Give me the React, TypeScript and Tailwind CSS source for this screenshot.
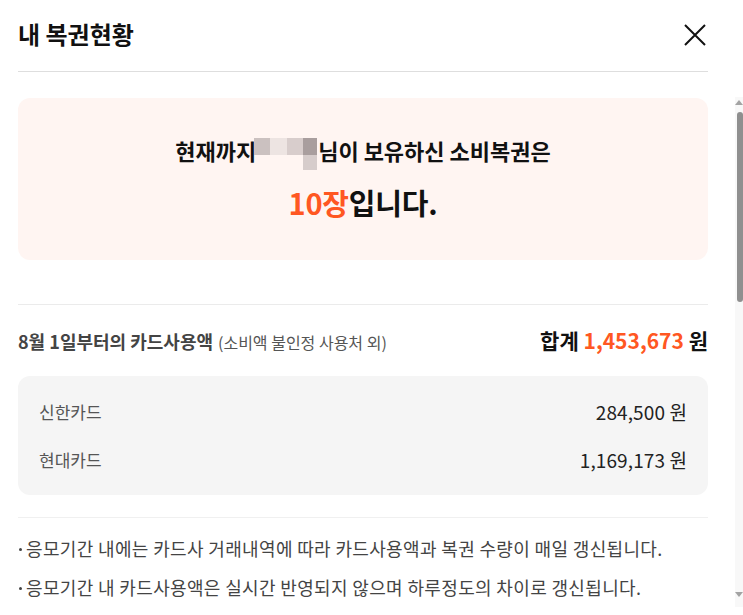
const font = { fontFamily: '"Noto Sans CJK KR", "Noto Sans", sans-serif' };

type CardUsage = {
    name: string;
    amount: string;
};

const cards: CardUsage[] = [
    { name: '신한카드', amount: '284,500' },
    { name: '현대카드', amount: '1,169,173' },
];

const notices = [
    '응모기간 내에는 카드사 거래내역에 따라 카드사용액과 복권 수량이 매일 갱신됩니다.',
    '응모기간 내 카드사용액은 실시간 반영되지 않으며 하루정도의 차이로 갱신됩니다.',
];

// Blurred user name, drawn as mosaic blocks
function NameMosaic() {
    return (
        <span className="inline-flex flex-col mt-[-1px] ml-[-2px] mr-[1px]">
            <span className="flex">
                <span className="w-[16px] h-[17px] bg-[#cbc1c0]" />
                <span className="w-[17px] h-[17px] bg-[#ede4e2]" />
                <span className="w-[16px] h-[17px] bg-[#d8cdcc]" />
                <span className="w-[14px] h-[17px] bg-[#a99e9e]" />
            </span>
            <span className="flex">
                <span className="w-[49px] h-[15px]" />
                <span className="w-[14px] h-[15px] bg-[#d6cccb]" />
            </span>
        </span>
    );
}

function Scrollbar() {
    return (
        <div className="w-[8px] mt-[97px] h-[510px] bg-[#f8f8f8] flex flex-col items-end">
            <div className="w-0 h-0 mt-[3px] border-l-[4px] border-r-[4px] border-b-[5px] border-l-transparent border-r-transparent border-b-[#a3a3a3]" />
            <div className="w-[6px] h-[190px] mt-[7px] rounded-[3px] bg-[#8f8f8f]" />
            <div className="flex-1" />
            <div className="w-0 h-0 mb-[10px] border-l-[4px] border-r-[4px] border-t-[5px] border-l-transparent border-r-transparent border-t-[#a3a3a3]" />
        </div>
    );
}

export default function App() {
    return (
        <div className="w-[743px] h-[615px] bg-white flex overflow-hidden" style={font}>
            <div className="w-[708px] pl-[18px] flex flex-col">
                {/* Header */}
                <div className="h-[72px] flex items-center justify-between border-b border-[#dedede]">
                    <h1 className="text-[24px] font-bold text-[#111] leading-none pb-[4px]">내 복권현황</h1>
                    <svg width="22" height="22" viewBox="0 0 22 22" className="mr-[2px] mb-[2px]">
                        <path d="M1 1 21 21M21 1 1 21" stroke="#111" strokeWidth="2" fill="none" />
                    </svg>
                </div>

                {/* Ticket summary */}
                <div className="mt-[26px] h-[162px] rounded-[12px] bg-[#fff5f2] flex flex-col items-center pt-[41px]">
                    <p className="h-[22px] text-[22px] font-bold text-[#111] leading-none flex items-start whitespace-nowrap">
                        현재까지<NameMosaic />님이 보유하신 소비복권은
                    </p>
                    <p className="text-[29px] font-bold text-[#111] leading-none mt-[27px] tracking-[-0.2px]">
                        <span className="text-[#ff5722]">10장</span>입니다.
                    </p>
                </div>

                <div className="mt-[44px] border-t border-[#ebebeb]" />

                {/* Card usage heading */}
                <div className="h-[71px] flex items-center justify-between">
                    <p className="text-[#444] leading-none">
                        <span className="text-[18px] font-bold">8월 1일부터의 카드사용액</span>
                        <span className="text-[16px] text-[#555] ml-[5px]">(소비액 불인정 사용처 외)</span>
                    </p>
                    <p className="text-[21px] font-bold text-[#111] leading-none">
                        합계 <span className="text-[#ff5722]">1,453,673</span> 원
                    </p>
                </div>

                {/* Card list */}
                <div className="h-[119px] rounded-[12px] bg-[#f5f5f5] px-[21px] pt-[23px] flex flex-col gap-[24px]">
                    {cards.map((card) => (
                        <div key={card.name} className="flex items-center justify-between leading-none h-[24px]">
                            <span className="text-[17px] text-[#555]">{card.name}</span>
                            <span className="text-[19px] text-[#222] tracking-[0.1px]">{card.amount} 원</span>
                        </div>
                    ))}
                </div>

                <div className="mt-[22px] border-t border-[#f0f0f0]" />

                {/* Notices */}
                <ul className="pt-[18px] flex flex-col gap-[15px]">
                    {notices.map((text) => (
                        <li key={text} className="flex items-center text-[18px] text-[#444] leading-[24px] whitespace-nowrap">
                            <span className="w-[3px] h-[3px] rounded-full bg-[#444] mr-[4px] ml-[1px] mt-[2px]" />
                            <span className="tracking-[0.35px]">{text}</span>
                        </li>
                    ))}
                </ul>
            </div>
            <div className="flex-1" />
            <Scrollbar />
        </div>
    );
}
